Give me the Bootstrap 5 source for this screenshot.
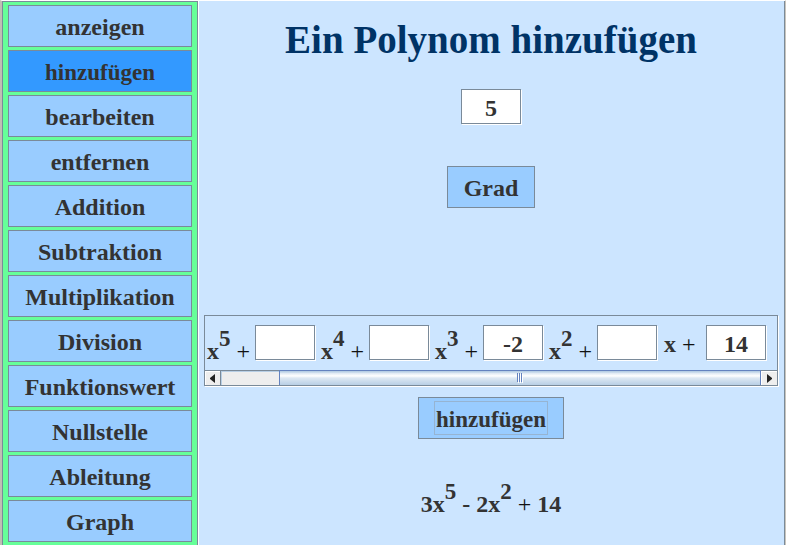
<!DOCTYPE html>
<html lang="de">
<head>
<meta charset="utf-8">
<meta name="viewport" content="width=device-width, initial-scale=1">
<title>Ein Polynom hinzufügen</title>
<link href="https://cdn.jsdelivr.net/npm/bootstrap@5.3.0/dist/css/bootstrap.min.css" rel="stylesheet">
<style>
:root { --line: #7a8a99; --ink: #333; --sky: #99ccff; --pale: #cce5ff; }
body { font-family: "Liberation Serif", "Times New Roman", serif; font-weight: 700; font-size: 24px; line-height: 26px; color: var(--ink); background: var(--pale); }
.window-frame { border-left: 2px solid #c0beb4; border-right: 1px solid #c8c4bc; border-top: 1px solid #fff; }
.side-menu { width: 196px; background: #66ff99; border: 1px solid var(--line); border-bottom: 0; padding: 3px 5px 2px; gap: 3px; }
.poly-btn { --bs-btn-font-size: 24px; --bs-btn-line-height: 26px; --bs-btn-font-weight: 700; --bs-btn-color: var(--ink); --bs-btn-bg: var(--sky); --bs-btn-border-color: var(--line); --bs-btn-hover-bg: #80bfff; --bs-btn-hover-color: var(--ink); --bs-btn-hover-border-color: var(--line); --bs-btn-active-bg: #3399ff; --bs-btn-active-color: var(--ink); --bs-btn-active-border-color: var(--line); --bs-btn-border-radius: 0; --bs-btn-padding-x: 12px; --bs-btn-padding-y: 0; height: 42px; padding-top: 1px; font-family: inherit; }
.side-menu .poly-btn { --bs-btn-padding-x: 0; }
.add-label { --bs-btn-font-size: 23px; padding-top: 3px; }
.focus-frame { display: block; border: 1px solid #96b4d2; padding: 2px 1px 0; height: 34px; line-height: 32px; }
.workspace { border-left: 1px solid #fff; border-right: 1px solid var(--line); padding: 14px 6px 0 5px; min-width: 0; }
.page-title { font-size: 39px; line-height: 50px; font-weight: 700; color: #003366; margin: 0 0 24px; }
.num-field { width: 60px; height: 35px; padding: 4px 0 0; border: 1px solid var(--line); border-radius: 0; box-shadow: 1px 1px 0 #fff; font: inherit; color: var(--ink); text-align: center; flex: none; }
.degree-btn { --bs-btn-padding-x: 0; margin-top: 42px; width: 88px; }
.poly-editor { margin-top: 107px; border: 1px solid var(--line); box-shadow: 1px 1px 0 #fff; }
.terms { height: 54px; padding: 9px 11px 0 2px; }
.terms .num-field + .term-label { margin-left: 6px; }
.power { line-height: 26px; white-space: nowrap; }
.power sup { font-size: 23px; line-height: 0; top: -13px; vertical-align: baseline; }
.plus { font-weight: 400; color: #111; }
.term-label { width: 48px; flex: none; padding-top: 13px; }
.term-label.late { width: 43px; padding-top: 6px; padding-left: 1px; }
.scroll-strip { height: 15px; border-top: 1px solid var(--line); background: #eee; }
.scroll-step { width: 16px; padding: 0; border: 0; background: #eee; box-shadow: inset 1px 1px 0 #fff; display: flex; align-items: center; justify-content: center; }
.scroll-step.back { border-right: 1px solid var(--line); }
.scroll-lane { padding-left: 58px; box-shadow: inset 1px 1px 0 #b8cfe5; }
.scroll-thumb { border: 1px solid #6382bf; border-bottom: 0; margin-top: -1px; background: linear-gradient(#b8cfe5 0 1px, #dde8f3 2px, #fff 35%, #dde8f3 50%, #b8cfe5); }
.submit-btn { --bs-btn-padding-x: 15px; margin-top: 11px; padding-top: 0; }
.result { margin: 52px 0 0; }
</style>
</head>
<body>
<div class="window-frame d-flex min-vh-100">
  <nav class="side-menu d-flex flex-column flex-shrink-0" aria-label="Menü">
    <button type="button" class="btn poly-btn">anzeigen</button>
    <button type="button" class="btn poly-btn add-label active">hinzufügen</button>
    <button type="button" class="btn poly-btn">bearbeiten</button>
    <button type="button" class="btn poly-btn">entfernen</button>
    <button type="button" class="btn poly-btn">Addition</button>
    <button type="button" class="btn poly-btn">Subtraktion</button>
    <button type="button" class="btn poly-btn">Multiplikation</button>
    <button type="button" class="btn poly-btn">Division</button>
    <button type="button" class="btn poly-btn">Funktionswert</button>
    <button type="button" class="btn poly-btn">Nullstelle</button>
    <button type="button" class="btn poly-btn">Ableitung</button>
    <button type="button" class="btn poly-btn">Graph</button>
  </nav>
  <main class="workspace flex-grow-1 d-flex flex-column align-items-center">
    <h1 class="page-title text-center">Ein Polynom hinzufügen</h1>
    <input class="num-field" type="text" value="5" aria-label="Grad">
    <button type="button" class="btn poly-btn degree-btn">Grad</button>
    <div class="poly-editor align-self-stretch">
      <div class="terms d-flex align-items-start overflow-hidden">
        <label class="power term-label" for="c4">x<sup>5</sup> <span class="plus">+</span></label>
        <input class="num-field" type="text" id="c4">
        <label class="power term-label" for="c3">x<sup>4</sup> <span class="plus">+</span></label>
        <input class="num-field" type="text" id="c3">
        <label class="power term-label" for="c2">x<sup>3</sup> <span class="plus">+</span></label>
        <input class="num-field" type="text" id="c2" value="-2">
        <label class="power term-label" for="c1">x<sup>2</sup> <span class="plus">+</span></label>
        <input class="num-field" type="text" id="c1">
        <label class="power term-label late" for="c0">x <span class="plus">+</span></label>
        <input class="num-field" type="text" id="c0" value="14">
      </div>
      <div class="scroll-strip d-flex">
        <button type="button" class="scroll-step back" aria-label="Nach links"><svg width="5" height="9" viewBox="0 0 5 9"><path d="M5 0v9L0 5V4z" fill="#222"/></svg></button>
        <div class="scroll-lane flex-grow-1 d-flex">
          <div class="scroll-thumb flex-grow-1 d-flex align-items-center justify-content-center"><svg width="6" height="10" viewBox="0 0 6 10" shape-rendering="crispEdges"><path d="M1 1h1v9H1zM3 1h1v9H3zM5 1h1v9H5z" fill="#fff"/><path d="M0 0h1v9H0zM2 0h1v9H2zM4 0h1v9H4z" fill="#6382bf"/></svg></div>
        </div>
        <button type="button" class="scroll-step" aria-label="Nach rechts"><svg width="5" height="9" viewBox="0 0 5 9"><path d="M0 0v9l5-4V4z" fill="#222"/></svg></button>
      </div>
    </div>
    <button type="button" class="btn poly-btn add-label submit-btn"><span class="focus-frame">hinzufügen</span></button>
    <p class="result power">3x<sup>5</sup> - 2x<sup>2</sup> <span class="plus">+</span> 14</p>
  </main>
</div>
<script src="https://cdn.jsdelivr.net/npm/bootstrap@5.3.0/dist/js/bootstrap.bundle.min.js"></script>
</body>
</html>
